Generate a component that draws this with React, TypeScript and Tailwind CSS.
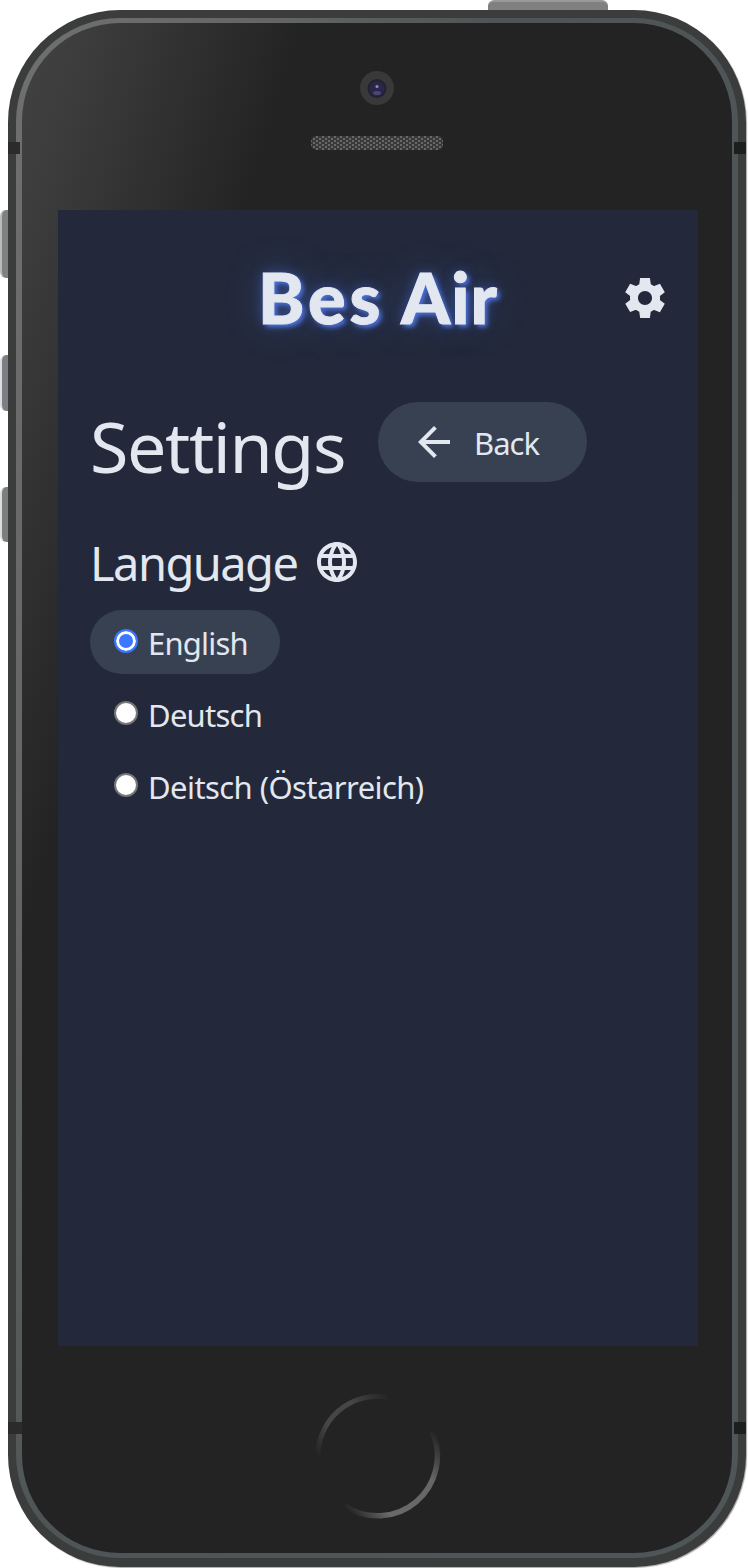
import { useState } from "react";
import { MdArrowBack, MdLanguage } from "react-icons/md";

const languages = [
  { name: "English", spacing: "tracking-[-0.8px]" },
  { name: "Deutsch", spacing: "tracking-[-0.75px]" },
  { name: "Deitsch (Östarreich)", spacing: "tracking-[-0.57px]" },
];

function GearIcon() {
  return (
    <svg viewBox="0 0 24 24" className="size-12" fill="currentColor" aria-hidden="true">
      <path d="M19.44 12.99l.01-.02c.04-.32.08-.64.08-.97 0-.33-.03-.66-.08-.98l.01.02 2.44-1.92-2.43-4.22-2.87 1.16.01.01c-.52-.4-1.09-.74-1.71-1h.01L14.44 2H9.57l-.44 3.07h.01c-.62.26-1.19.6-1.71 1l.01-.01-2.88-1.17-2.44 4.22 2.44 1.92.01-.02c-.04.33-.07.65-.07.98 0 .33.03.66.08.98l-.01-.02-2.1 1.65-.33.26 2.43 4.2 2.88-1.15-.02-.04c.53.41 1.1.75 1.73 1.01h-.03L9.58 22h4.85s.03-.18.06-.42l.38-2.65h-.01c.62-.26 1.2-.6 1.73-1.01l-.02.04 2.88 1.15 2.43-4.2s-.14-.12-.33-.26l-2.11-1.66zM12 15.5c-1.93 0-3.5-1.57-3.5-3.5s1.57-3.5 3.5-3.5 3.5 1.57 3.5 3.5-1.57 3.5-3.5 3.5z" />
    </svg>
  );
}

function FrontCamera() {
  return (
    <svg viewBox="0 0 34 34" className="size-[34px]" aria-hidden="true">
      <circle cx="17" cy="17" r="17" fill="#393939" />
      <circle cx="17" cy="17.500" r="9.500" fill="#232230" />
      <circle cx="17" cy="17.500" r="7.500" fill="#29264a" />
      <ellipse cx="17" cy="22" rx="4" ry="2" fill="#4a4675" />
      <circle cx="17" cy="15.500" r="1.600" fill="#8f8cb4" />
    </svg>
  );
}

function Speaker() {
  return (
    <svg viewBox="0 0 134 14" className="h-[14px] w-[134px]" aria-hidden="true">
      <defs>
        <pattern id="mesh" width="6" height="4" patternUnits="userSpaceOnUse">
          <rect width="6" height="4" fill="#393939" />
          <rect x="0" y="0" width="2" height="2" fill="#696969" />
          <rect x="3" y="2" width="2" height="2" fill="#696969" />
        </pattern>
      </defs>
      <rect x="1" width="132" height="14" rx="5" fill="url(#mesh)" />
    </svg>
  );
}

function HomeButton() {
  return (
    <svg viewBox="0 0 126 126" className="size-[126px]" fill="none" aria-hidden="true">
      <defs>
        <linearGradient id="homeUpper" gradientUnits="userSpaceOnUse" x1="3" y1="64" x2="74" y2="3">
          <stop offset="0" stopColor="#464646" stopOpacity="0" />
          <stop offset="0.3" stopColor="#464646" />
          <stop offset="0.65" stopColor="#464646" />
          <stop offset="1" stopColor="#464646" stopOpacity="0" />
        </linearGradient>
        <linearGradient id="homeLower" gradientUnits="userSpaceOnUse" x1="119" y1="38" x2="30" y2="115">
          <stop offset="0" stopColor="#666" stopOpacity="0" />
          <stop offset="0.28" stopColor="#666" />
          <stop offset="0.75" stopColor="#6a6a6a" />
          <stop offset="1" stopColor="#666" stopOpacity="0" />
        </linearGradient>
      </defs>
      <path d="M3 66A60 60 0 0 1 73 4" stroke="url(#homeUpper)" strokeWidth="5" />
      <path d="M117.500 39A60 60 0 0 1 29.500 113" stroke="url(#homeLower)" strokeWidth="5.500" />
    </svg>
  );
}

function Screen() {
  const [selected, setSelected] = useState("English");
  return (
    <main className="h-[1136px] w-[640px] bg-[#23293a] text-[#e2e7f0]">
      <header className="grid h-44 grid-cols-[563px_48px] items-center">
        <h1 className="-mt-0.5 pl-[200px] font-['Lato',sans-serif] text-[70px] leading-none font-black whitespace-nowrap [-webkit-text-stroke:1px_#e2e7f0] [text-shadow:3px_3px_4px_#4b70d8,0_0_12px_#4b70d880,0_0_36px_#4b70d866]">
          <span className="tracking-[4px]">Bes</span> <span className="tracking-[1px]">Air</span>
        </h1>
        <button aria-label="Settings">
          <GearIcon />
        </button>
      </header>
      <div className="flex h-[104px] items-start pt-4 pl-8">
        <h2 className="w-[288px] text-[70px] leading-[88px] tracking-[-1.4px] whitespace-nowrap">Settings</h2>
        <button className="flex h-20 w-[209px] items-center gap-4 rounded-full bg-[#374152] pl-8 text-[31px]">
          <MdArrowBack className="size-12" />
          <span className="pt-0.5 leading-10 tracking-[-1px]">Back</span>
        </button>
      </div>
      <div className="mt-11 flex h-14 items-center pl-8">
        <h3 className="w-[223px] pt-0.5 text-[47px] leading-[56px] tracking-[-1.55px] whitespace-nowrap">Language</h3>
        <MdLanguage className="size-12" />
      </div>
      <div className="mt-5 flex flex-col items-start gap-2 pl-8">
        {languages.map(({ name, spacing }) => (
          <label
            key={name}
            className={`flex h-16 items-center rounded-full pr-8 pl-6 ${selected === name ? "bg-[#374152]" : ""}`}
          >
            <input
              type="radio"
              name="language"
              checked={selected === name}
              onChange={() => setSelected(name)}
              className="mb-0.5 size-6 appearance-none rounded-full border-2 border-[#767676] bg-white checked:border-[#3b78ff] checked:bg-[#3b78ff] checked:shadow-[inset_0_0_0_3px_white]"
            />
            <span className={`pt-0.5 pl-2.5 text-[31px] leading-10 whitespace-nowrap ${spacing}`}>{name}</span>
          </label>
        ))}
      </div>
    </main>
  );
}

export default function App() {
  return (
    <div className="relative h-[1568px] w-[748px] overflow-hidden bg-white pt-2.5 pl-2 font-['Noto_Sans','Open_Sans',sans-serif]">
      <div className="absolute top-0 left-[488px] h-3 w-[120px] rounded-t-md border-t-2 border-[#999] bg-[#808080]" />
      <div className="absolute top-[210px] left-0 h-[68px] w-3 rounded-l-md border-l-2 border-[#bbb] bg-[#808080]" />
      <div className="absolute top-[355px] left-0 h-[56px] w-3 rounded-l-md border-l-2 border-[#ddd] bg-[#7d7d85]" />
      <div className="absolute top-[487px] left-0 h-[55px] w-3 rounded-l-md border-l-2 border-[#ddd] bg-[#7d7d80]" />
      <div className="relative h-[1557px] w-[738px] rounded-[112px] bg-[#3b3d3c] p-2 pb-[9px] shadow-[1px_1px_1px_#aaa]">
        <div className="h-[1540px] w-[722px] rounded-[104px] bg-[linear-gradient(107deg,#707070_0%,#666_20%,#4f5556_40%,#4f5659_100%)] p-[6px] pt-[5px]">
          <div className="flex h-[1530px] w-[710px] flex-col items-center rounded-[98px] bg-[linear-gradient(107deg,#424242_0%,#3b3b3b_7%,#232323_24%)] pr-px">
            <div className="flex h-[187px] flex-col items-center gap-[31px] pt-[48px]">
              <FrontCamera />
              <Speaker />
            </div>
            <div className="pl-[3px]">
              <Screen />
            </div>
            <div className="pt-[47px] pl-0.5">
              <HomeButton />
            </div>
          </div>
        </div>
        <div className="absolute top-[132px] left-0 h-3 w-3 bg-[#2b2b2b]" />
        <div className="absolute top-[132px] right-0 h-3 w-3 bg-[#1d1f1e]" />
        <div className="absolute top-[1412px] left-0 h-3 w-3.5 bg-[#2b2b2b]" />
        <div className="absolute top-[1412px] right-0 h-3 w-3 bg-[#1d1f1e]" />
      </div>
    </div>
  );
}
